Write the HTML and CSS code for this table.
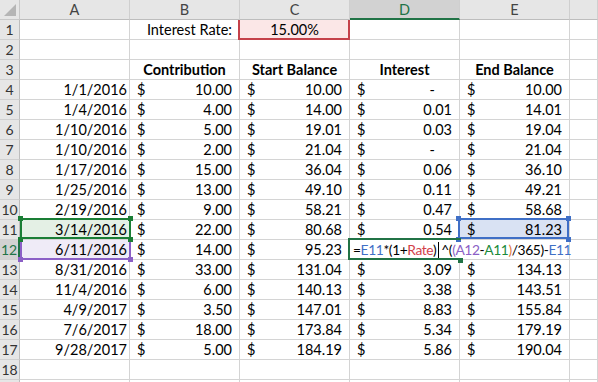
FILE: index.html
```html
<!DOCTYPE html>
<html lang="en">
<head>
    <title>Interest Sheet</title>
    <meta charset="UTF-8">
    <link rel="stylesheet" href="styles.css">
</head>
<body>
    <div class="sheet">
        <!-- column headers -->
        <div class="row head">
            <div class="corner"><svg width="19" height="19" viewBox="0 0 19 19"><polygon points="16,4 16,16 4,16" fill="#b5b5b5"/></svg></div>
            <div class="ch">A</div>
            <div class="ch">B</div>
            <div class="ch">C</div>
            <div class="ch sel">D</div>
            <div class="ch">E</div>
            <div class="ch"></div>
        </div>

        <div class="row">
            <div class="rh">1</div>
            <div class="cell"></div>
            <div class="cell num pad">Interest Rate:</div>
            <div class="cell mid ref-red">15.00%</div>
            <div class="cell"></div>
            <div class="cell"></div>
            <div class="cell"></div>
        </div>
        <div class="row">
            <div class="rh">2</div>
            <div class="cell"></div><div class="cell"></div><div class="cell"></div><div class="cell"></div><div class="cell"></div><div class="cell"></div>
        </div>
        <div class="row">
            <div class="rh">3</div>
            <div class="cell"></div>
            <div class="cell mid bold">Contribution</div>
            <div class="cell mid bold">Start Balance</div>
            <div class="cell mid bold">Interest</div>
            <div class="cell mid bold">End Balance</div>
            <div class="cell"></div>
        </div>
        <div class="row">
            <div class="rh">4</div>
            <div class="cell num">1/1/2016</div>
            <div class="cell acc"><span>$</span><span>10.00</span></div>
            <div class="cell acc"><span>$</span><span>10.00</span></div>
            <div class="cell acc"><span>$</span><span class="dash">-</span></div>
            <div class="cell acc"><span>$</span><span>10.00</span></div>
            <div class="cell"></div>
        </div>
        <div class="row">
            <div class="rh">5</div>
            <div class="cell num">1/4/2016</div>
            <div class="cell acc"><span>$</span><span>4.00</span></div>
            <div class="cell acc"><span>$</span><span>14.00</span></div>
            <div class="cell acc"><span>$</span><span>0.01</span></div>
            <div class="cell acc"><span>$</span><span>14.01</span></div>
            <div class="cell"></div>
        </div>
        <div class="row">
            <div class="rh">6</div>
            <div class="cell num">1/10/2016</div>
            <div class="cell acc"><span>$</span><span>5.00</span></div>
            <div class="cell acc"><span>$</span><span>19.01</span></div>
            <div class="cell acc"><span>$</span><span>0.03</span></div>
            <div class="cell acc"><span>$</span><span>19.04</span></div>
            <div class="cell"></div>
        </div>
        <div class="row">
            <div class="rh">7</div>
            <div class="cell num">1/10/2016</div>
            <div class="cell acc"><span>$</span><span>2.00</span></div>
            <div class="cell acc"><span>$</span><span>21.04</span></div>
            <div class="cell acc"><span>$</span><span class="dash">-</span></div>
            <div class="cell acc"><span>$</span><span>21.04</span></div>
            <div class="cell"></div>
        </div>
        <div class="row">
            <div class="rh">8</div>
            <div class="cell num">1/17/2016</div>
            <div class="cell acc"><span>$</span><span>15.00</span></div>
            <div class="cell acc"><span>$</span><span>36.04</span></div>
            <div class="cell acc"><span>$</span><span>0.06</span></div>
            <div class="cell acc"><span>$</span><span>36.10</span></div>
            <div class="cell"></div>
        </div>
        <div class="row">
            <div class="rh">9</div>
            <div class="cell num">1/25/2016</div>
            <div class="cell acc"><span>$</span><span>13.00</span></div>
            <div class="cell acc"><span>$</span><span>49.10</span></div>
            <div class="cell acc"><span>$</span><span>0.11</span></div>
            <div class="cell acc"><span>$</span><span>49.21</span></div>
            <div class="cell"></div>
        </div>
        <div class="row">
            <div class="rh">10</div>
            <div class="cell num">2/19/2016</div>
            <div class="cell acc"><span>$</span><span>9.00</span></div>
            <div class="cell acc"><span>$</span><span>58.21</span></div>
            <div class="cell acc"><span>$</span><span>0.47</span></div>
            <div class="cell acc"><span>$</span><span>58.68</span></div>
            <div class="cell"></div>
        </div>
        <div class="row">
            <div class="rh">11</div>
            <div class="cell num ref-green">3/14/2016<i class="h tl"></i><i class="h tr"></i><i class="h bl"></i><i class="h br"></i></div>
            <div class="cell acc"><span>$</span><span>22.00</span></div>
            <div class="cell acc"><span>$</span><span>80.68</span></div>
            <div class="cell acc"><span>$</span><span>0.54</span></div>
            <div class="cell acc ref-blue"><span>$</span><span>81.23</span><i class="h tl"></i><i class="h tr"></i><i class="h bl"></i><i class="h br"></i></div>
            <div class="cell"></div>
        </div>
        <div class="row">
            <div class="rh sel">12</div>
            <div class="cell num ref-purple">6/11/2016<i class="h bl"></i><i class="h br"></i></div>
            <div class="cell acc"><span>$</span><span>14.00</span></div>
            <div class="cell acc"><span>$</span><span>95.23</span></div>
            <div class="cell editing">
                <span class="formula">=<b class="f-blue">E11</b>*(1+<b class="f-red">Rate</b>)<i class="caret"></i>^(<b class="f-purple">(A12</b>-<b class="f-green">A11</b><b class="f-orange">)</b>/365)-<b class="f-blue">E11</b></span>
                <i class="h br"></i>
            </div>
            <div class="cell"></div>
            <div class="cell"></div>
        </div>
        <div class="row">
            <div class="rh">13</div>
            <div class="cell num">8/31/2016</div>
            <div class="cell acc"><span>$</span><span>33.00</span></div>
            <div class="cell acc"><span>$</span><span>131.04</span></div>
            <div class="cell acc"><span>$</span><span>3.09</span></div>
            <div class="cell acc"><span>$</span><span>134.13</span></div>
            <div class="cell"></div>
        </div>
        <div class="row">
            <div class="rh">14</div>
            <div class="cell num">11/4/2016</div>
            <div class="cell acc"><span>$</span><span>6.00</span></div>
            <div class="cell acc"><span>$</span><span>140.13</span></div>
            <div class="cell acc"><span>$</span><span>3.38</span></div>
            <div class="cell acc"><span>$</span><span>143.51</span></div>
            <div class="cell"></div>
        </div>
        <div class="row">
            <div class="rh">15</div>
            <div class="cell num">4/9/2017</div>
            <div class="cell acc"><span>$</span><span>3.50</span></div>
            <div class="cell acc"><span>$</span><span>147.01</span></div>
            <div class="cell acc"><span>$</span><span>8.83</span></div>
            <div class="cell acc"><span>$</span><span>155.84</span></div>
            <div class="cell"></div>
        </div>
        <div class="row">
            <div class="rh">16</div>
            <div class="cell num">7/6/2017</div>
            <div class="cell acc"><span>$</span><span>18.00</span></div>
            <div class="cell acc"><span>$</span><span>173.84</span></div>
            <div class="cell acc"><span>$</span><span>5.34</span></div>
            <div class="cell acc"><span>$</span><span>179.19</span></div>
            <div class="cell"></div>
        </div>
        <div class="row">
            <div class="rh">17</div>
            <div class="cell num">9/28/2017</div>
            <div class="cell acc"><span>$</span><span>5.00</span></div>
            <div class="cell acc"><span>$</span><span>184.19</span></div>
            <div class="cell acc"><span>$</span><span>5.86</span></div>
            <div class="cell acc"><span>$</span><span>190.04</span></div>
            <div class="cell"></div>
        </div>
        <div class="row">
            <div class="rh">18</div>
            <div class="cell"></div><div class="cell"></div><div class="cell"></div><div class="cell"></div><div class="cell"></div><div class="cell"></div>
        </div>
        <div class="row">
            <div class="rh"></div>
            <div class="cell"></div><div class="cell"></div><div class="cell"></div><div class="cell"></div><div class="cell"></div><div class="cell"></div>
        </div>
    </div>
</body>
</html>
```

FILE: styles.css
```css
body {
    margin: 0;
    background-color: white;
    font-family: Lato, "Open Sans", sans-serif;
    font-size: 14.5px;
    color: #000;
    overflow: hidden;
}
.sheet {
    width: 598px;
    height: 382px;
    overflow: hidden;
}
.row {
    display: grid;
    grid-template-columns: 20px repeat(5, 110px) 1fr;
    height: 20px;
}
.row > div {
    box-sizing: border-box;
    height: 20px;
    line-height: 19px;
    white-space: nowrap;
    position: relative;
}

/* headers */
.corner, .ch, .rh {
    background-color: #e6e6e6;
    border-right: 1px solid #c8c8c8;
    border-bottom: 1px solid #c8c8c8;
    color: #333;
    text-align: center;
}
.corner svg {
    display: block;
}
.ch {
    border-bottom-color: #bdbdbd;
    border-right-color: #cfcfcf;
    color: #444;
}
.ch.sel {
    background-color: #d2d2d2;
    border-bottom: 2px solid #217346;
    color: #217346;
}
.rh {
    border-bottom-color: #d0d0d0;
    border-right-color: #bdbdbd;
    font-size: 14px;
}
.rh.sel {
    background-color: #d2d2d2;
    border-right: 2px solid #217346;
    color: #217346;
}

/* cells */
.cell {
    border-right: 1px solid #d4d4d4;
    border-bottom: 1px solid #d4d4d4;
    padding: 0 2px;
}
.num {
    text-align: right;
}
.pad {
    padding-right: 7px;
}
.mid {
    text-align: center;
}
.bold {
    font-weight: bold;
}
.acc {
    display: flex;
    justify-content: space-between;
    padding: 0 7px;
}
.dash {
    padding-right: 17px;
}

/* reference highlights while editing the formula */
.ref-red {
    background-color: #fbe7e7;
}
.ref-red::after {
    content: "";
    position: absolute;
    top: 0;
    left: -2px;
    right: -1px;
    bottom: -1px;
    border: 2px solid #c4414a;
    border-top: 0;
}
.ref-green {
    background-color: #e4f0e5;
}
.ref-green::after {
    content: "";
    position: absolute;
    top: -2px;
    left: 0;
    right: -2px;
    bottom: 0;
    border: 2px solid #1a7e35;
    z-index: 2;
}
.ref-green .h {
    background-color: #1a7e35;
    z-index: 3;
}
.ref-purple {
    background-color: #efebf7;
}
.ref-purple::after {
    content: "";
    position: absolute;
    top: -1px;
    left: 0;
    right: -2px;
    bottom: -1px;
    border: 2px solid #8b5fc6;
    border-top: 0;
    z-index: 1;
}
.ref-purple .h {
    background-color: #8b5fc6;
}
.ref-blue {
    background-color: #d9e2f3;
}
.ref-blue::after {
    content: "";
    position: absolute;
    top: -2px;
    left: -2px;
    right: 0;
    bottom: 0;
    border: 2px solid #3f6fc6;
    z-index: 2;
}
.ref-blue .h {
    background-color: #3f6fc6;
    z-index: 3;
}

/* corner handles */
.h {
    position: absolute;
    width: 5px;
    height: 5px;
    z-index: 2;
}
.h.tl { top: -4px; left: -2px; }
.h.tr { top: -4px; right: -4px; }
.h.bl { bottom: -3px; left: -2px; }
.h.br { bottom: -3px; right: -4px; }
.ref-blue .h.tl, .ref-blue .h.bl { left: -4px; }
.ref-blue .h.tr, .ref-blue .h.br { right: -2px; }

/* cell being edited */
.editing {
    border-right-color: transparent !important;
    z-index: 4;
    overflow: visible;
}
.editing::before {
    content: "";
    position: absolute;
    top: -2px;
    left: -2px;
    right: -2px;
    bottom: -1px;
    border: 2px solid #217346;
    border-right: 0;
}
.editing .h {
    background-color: #217346;
    bottom: -4px;
    right: -4px;
}
.formula {
    position: absolute;
    left: 3px;
    top: 0;
    font-size: 13.8px;
    letter-spacing: -0.4px;
    line-height: 19px;
}
.formula b {
    font-weight: normal;
}
.f-blue { color: #3f6fc6; }
.f-red { color: #d2404a; }
.f-purple { color: #8b5fc6; }
.f-green { color: #1a8a3a; }
.f-orange { color: #e07a3c; }
.caret {
    display: inline-block;
    width: 1px;
    height: 16px;
    background-color: #000;
    vertical-align: -3px;
    margin: 0 2px 0 2px;
}
```
